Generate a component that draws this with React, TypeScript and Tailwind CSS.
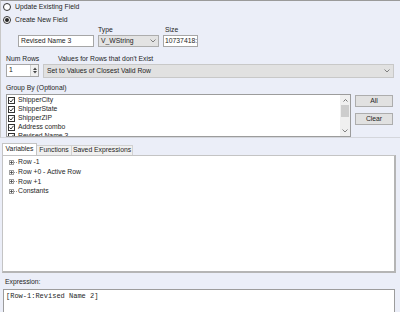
import React from "react";

const groupItems = ["ShipperCity", "ShipperState", "ShipperZIP", "Address combo", "Revised Name 3"];
const treeItems = ["Row -1", "Row +0 - Active Row", "Row +1", "Constants"];

function Radio({ checked, label }: { checked?: boolean; label: string }) {
  return (
    <div className="flex items-center h-[9px]">
      <span className="ml-[2px] w-[8px] h-[8px] rounded-full border border-[#333] bg-white flex items-center justify-center">
        {checked && <span className="w-[4px] h-[4px] rounded-full bg-[#222]" />}
      </span>
      <span className="ml-[4px]">{label}</span>
    </div>
  );
}

function Check({ label }: { label: string }) {
  return (
    <div className="flex items-center h-[9px] shrink-0">
      <span className="w-[7px] h-[7px] border border-[#333] bg-white flex items-center justify-center">
        <svg width="5" height="5" viewBox="0 0 5 5">
          <path d="M0.5 2.5 L2 4 L4.5 0.8" fill="none" stroke="#222" strokeWidth="0.9" />
        </svg>
      </span>
      <span className="ml-[3px]">{label}</span>
    </div>
  );
}

function Chevron() {
  return (
    <svg width="6" height="4" viewBox="0 0 6 4">
      <path d="M0.5 0.5 L3 3 L5.5 0.5" fill="none" stroke="#666" strokeWidth="0.8" />
    </svg>
  );
}

export default function App() {
  return (
    <div className="w-[400px] h-[312px] overflow-hidden bg-[#ebeef8] text-[6.8px] leading-none text-[#1e1e1e] font-['Liberation_Sans',Arial,sans-serif]">
      {/* Field settings group */}
      <div className="h-[138px] border-t border-l border-b border-t-[#9a9a9a] border-l-[#c8c8c8] border-b-[#d4d6dc] pt-[2px] flex flex-col">
        <Radio label="Update Existing Field" />
        <div className="h-[6px]" />
        <Radio checked label="Create New  Field" />

        <div className="flex mt-[3px] h-[20px]">
          <div className="ml-[17px] w-[76px] flex flex-col justify-end">
            <div className="h-[12px] bg-white border border-[#a6a6a6] flex items-center px-[2px]">Revised Name 3</div>
          </div>
          <div className="ml-[4px] w-[61px] flex flex-col">
            <span className="h-[8px]">Type</span>
            <div className="h-[12px] bg-[#e3e3e3] border border-[#adadad] flex items-center justify-between px-[2px]">
              <span>V_WString</span>
              <Chevron />
            </div>
          </div>
          <div className="ml-[4px] w-[35px] flex flex-col">
            <span className="h-[8px] pl-[2px]">Size</span>
            <div className="h-[12px] bg-white border border-[#a6a6a6] flex items-center px-[1px] overflow-hidden whitespace-nowrap">10737418:</div>
          </div>
        </div>

        <div className="flex mt-[9px] h-[7px] items-center">
          <span className="ml-[5px] w-[52px]">Num Rows</span>
          <span>Values for Rows that don't Exist</span>
        </div>
        <div className="flex mt-[1px] h-[14px]">
          <div className="ml-[5px] w-[33px] h-[13px] bg-white border border-[#a6a6a6] flex items-center">
            <span className="flex-1 pl-[2px]">1</span>
            <div className="w-[8px] h-full border-l border-[#cfcfcf] bg-[#f0f0f0] flex flex-col items-center justify-center gap-[1px]">
              <svg width="4" height="3" viewBox="0 0 4 3"><path d="M0 3 L2 0.5 L4 3Z" fill="#444" /></svg>
              <svg width="4" height="3" viewBox="0 0 4 3"><path d="M0 0 L2 2.5 L4 0Z" fill="#444" /></svg>
            </div>
          </div>
          <div className="ml-[4px] w-[351px] h-[14px] bg-[#e1e1e1] border border-[#c8c8c8] flex items-center justify-between px-[3px]">
            <span>Set to Values of Closest Valid Row</span>
            <Chevron />
          </div>
        </div>

        <span className="ml-[5px] mt-[7px] h-[7px]">Group By (Optional)</span>
        <div className="flex mt-[2px]">
          <div className="ml-[5px] w-[345px] h-[43px] bg-white border border-[#9c9c9c] flex overflow-hidden">
            <div className="flex-1 flex flex-col pl-[1px] pt-[1px] overflow-hidden">
              {groupItems.map((g) => (
                <Check key={g} label={g} />
              ))}
            </div>
            <div className="w-[10px] h-full bg-[#f0f0f0] flex flex-col items-center">
              <div className="h-[10px] flex items-center">
                <svg width="5" height="3" viewBox="0 0 5 3"><path d="M0.5 2.5 L2.5 0.5 L4.5 2.5" fill="none" stroke="#555" strokeWidth="0.8" /></svg>
              </div>
              <div className="w-[8px] h-[12px] bg-[#cdcdcd]" />
              <div className="flex-1" />
              <div className="h-[10px] flex items-center">
                <Chevron />
              </div>
            </div>
          </div>
          <div className="ml-[4px] flex flex-col gap-[6px] pt-[1px]">
            <div className="w-[38px] h-[12px] bg-[#e1e1e1] border border-[#adadad] flex items-center justify-center">All</div>
            <div className="w-[38px] h-[12px] bg-[#e1e1e1] border border-[#adadad] flex items-center justify-center">Clear</div>
          </div>
        </div>
      </div>

      {/* Tabs */}
      <div className="mt-[5px] ml-[2px] flex items-end h-[12px]">
        <div className="w-[35px] h-[12px] bg-white border border-b-0 border-[#c4c4c4] flex items-center justify-center">Variables</div>
        <div className="w-[35px] h-[10px] bg-[#f0f0f0] border border-b-0 border-l-0 border-[#d2d2d2] flex items-center justify-center">Functions</div>
        <div className="w-[61px] h-[10px] bg-[#f0f0f0] border border-b-0 border-l-0 border-[#d2d2d2] flex items-center justify-center">Saved Expressions</div>
      </div>
      <div className="ml-[2px] w-[394px] h-[118px] bg-white border border-[#c4c4c4] border-r-2 border-r-[#b5b5b5] border-b-2 border-b-[#b5b5b5] pt-[2px] flex flex-col">
        {treeItems.map((t) => (
          <div key={t} className="flex items-center h-[9.6px]">
            <span className="ml-[6px] w-[5px] h-[5px] border border-[#a0a0a0] flex items-center justify-center">
              <svg width="3" height="3" viewBox="0 0 3 3"><path d="M0 1.5 H3 M1.5 0 V3" stroke="#333" strokeWidth="0.7" /></svg>
            </span>
            <span className="w-[3px] border-t border-dotted border-[#999]" />
            <span className="ml-[1px]">{t}</span>
          </div>
        ))}
      </div>

      {/* Expression */}
      <div className="ml-[5px] mt-[6px] h-[7px]">Expression:</div>
      <div className="ml-[3px] mt-[3px] w-[392px] h-[30px] bg-white border border-[#9c9c9c] pl-[2px] pt-[3px] font-['Liberation_Mono','Courier_New',monospace] text-[7px]">
        [Row-1:Revised Name 2]
      </div>
    </div>
  );
}
